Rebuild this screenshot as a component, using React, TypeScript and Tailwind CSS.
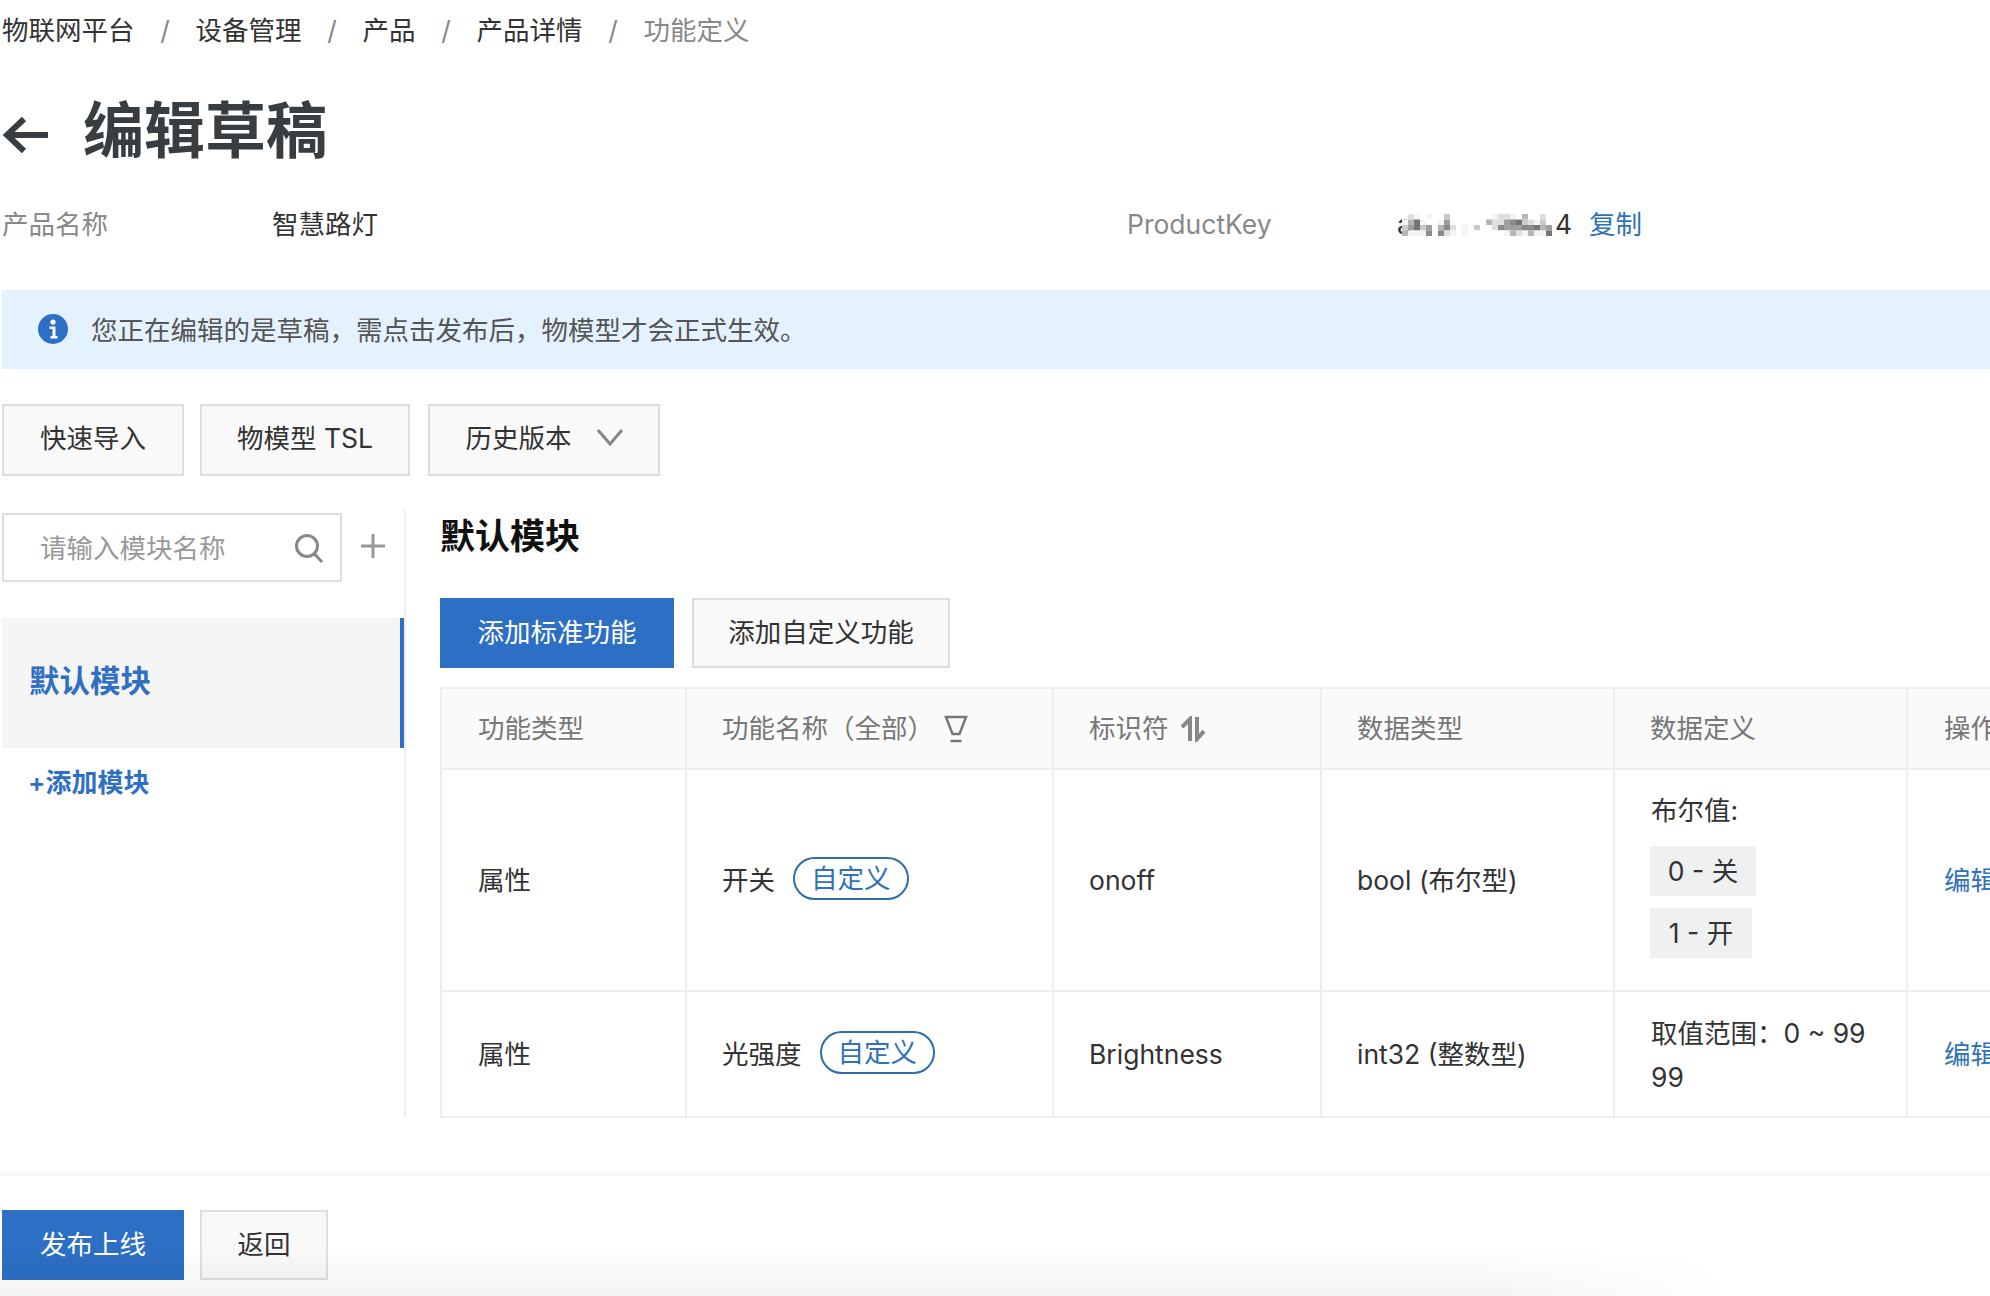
const crumbs = ["物联网平台", "设备管理", "产品", "产品详情"];

// 打码区域的灰度块
const mosaic = [
  ["fff", "ccc", "e0e0e0", "fff", "ddd", "fff", "fff", "bbb", "fff", "fff", "fff", "fff", "fff", "eee", "e4e4e4", "ddd", "ccc", "ccc", "ddd", "fff", "aaa", "fff", "e5e5e5", "ccc", "fff"],
  ["ddd", "aaa", "777", "ddd", "eee", "e5e5e5", "ddd", "999", "fff", "fff", "eee", "eee", "eee", "eee", "aaa", "ccc", "ccc", "999", "888", "777", "bbb", "ccc", "ddd", "bbb", "eee"],
  ["bbb", "999", "777", "bbb", "999", "fff", "aaa", "888", "ccc", "fff", "ddd", "e8e8e8", "bbb", "fff", "eee", "ccc", "888", "999", "999", "999", "888", "888", "777", "aaa", "999"],
  ["aaa", "ddd", "ddd", "ddd", "888", "fff", "888", "ccc", "ddd", "eee", "ddd", "eee", "eee", "fff", "fff", "fff", "fff", "ddd", "aaa", "ccc", "ddd", "aaa", "ddd", "ddd", "777"],
];

function Tag() {
  return (
    <span className="-mt-[5px] inline-flex h-[43px] items-center rounded-full border-2 border-[#2f6ea8] px-[16px] text-[#2f72b8]">
      自定义
    </span>
  );
}

export default function App() {
  return (
    <div className="relative h-[1296px] w-[1990px] overflow-hidden bg-white pl-[2px] font-['Inter','Noto_Sans_CJK_SC',sans-serif] text-[26.5px] text-[#333]">
      {/* 面包屑 */}
      <div className="flex h-[61px] items-center leading-none">
        {crumbs.map((c) => (
          <div key={c} className="flex items-center">
            <span>{c}</span>
            <span className="w-[61px] text-center text-[#888]">/</span>
          </div>
        ))}
        <span className="text-[#888]">功能定义</span>
      </div>

      {/* 标题 */}
      <div className="flex h-[137px] items-center">
        <svg width="48" height="40" viewBox="0 0 48 40" className="mt-[10px] text-[#373d41]" fill="none" stroke="currentColor" strokeWidth="6">
          <path d="M22 4 L5 20 L22 36" />
          <path d="M5 20 H46" />
        </svg>
        <h1 className="mt-[3px] ml-[33px] text-[61px] leading-none font-bold text-[#373d41]">编辑草稿</h1>
      </div>

      {/* 产品信息 */}
      <div className="flex h-[54px] items-center">
        <span className="w-[270px] text-[#888]">产品名称</span>
        <span className="w-[855px]">智慧路灯</span>
        <span className="w-[270px] text-[#888]">ProductKey</span>
        <span>a</span>
        <svg width="150" height="22" viewBox="0 0 150 22" className="mr-[3px] -ml-[10px] contrast-125">
          {mosaic.map((row, y) =>
            row.map((c, x) => <rect key={x} x={x * 6} y={y * 5.5} width="6" height="5.5" fill={`#${c}`} />),
          )}
        </svg>
        <span>4</span>
        <span className="ml-[17px] text-[#2f72b8]">复制</span>
      </div>

      {/* 提示 */}
      <div className="mt-[38px] flex h-[79px] items-center bg-[#e4f1fe] pl-[36px] text-[#555]">
        <svg width="30" height="30" viewBox="0 0 30 30" className="-mt-[2px]">
          <circle cx="15" cy="15" r="15" fill="#2d6fc4" />
          <circle cx="15" cy="8" r="2.6" fill="#fff" />
          <path d="M11.5 12.5 H17.5 V22 H19.5 V24.5 H12.5 V22 H14.5 V15 H11.5 Z" fill="#fff" />
        </svg>
        <span className="mt-[3px] ml-[23px]">您正在编辑的是草稿，需点击发布后，物模型才会正式生效。</span>
      </div>

      {/* 工具按钮 */}
      <div className="mt-[35px] flex h-[72px] gap-[16px]">
        <button className="w-[182px] border-2 border-[#ddd] bg-[#f9f9f9] pb-[2px]">快速导入</button>
        <button className="w-[210px] border-2 border-[#ddd] bg-[#f9f9f9] pb-[2px]">物模型 TSL</button>
        <button className="ml-[2px] flex w-[232px] items-center justify-center gap-[25px] border-2 border-[#ddd] bg-[#f9f9f9] pb-[2px]">
          历史版本
          <svg width="26" height="17" viewBox="0 0 26 17" className="-mt-[4px]" fill="none" stroke="#888" strokeWidth="3">
            <path d="M1 1 L13 15 L25 1" />
          </svg>
        </button>
      </div>

      <div className="mt-[34px] flex h-[607px]">
        {/* 模块列表 */}
        <aside className="w-[404px] shrink-0 border-r-2 border-[#eee] pt-[3px]">
          <div className="flex items-center">
            <div className="flex h-[69px] w-[340px] items-center border-2 border-[#ddd] pr-[16px] pl-[36px]">
              <input placeholder="请输入模块名称" className="mt-[2px] w-full min-w-0 flex-1 outline-none placeholder:text-[#999]" />
              <svg width="30" height="30" viewBox="0 0 30 30" fill="none" stroke="#888" strokeWidth="3">
                <circle cx="13" cy="13" r="10.5" />
                <path d="M20.5 21 L28 29" />
              </svg>
            </div>
            <svg width="26" height="26" viewBox="0 0 26 26" className="-mt-[4px] ml-[18px]" stroke="#999" strokeWidth="3">
              <path d="M13 1 V25 M1 13 H25" />
            </svg>
          </div>
          <div className="mt-[36px] flex h-[130px] items-center border-r-4 border-[#2d6fc4] bg-[#f5f5f5] pb-[5px] pl-[27px] text-[30.5px] font-semibold text-[#2f6fc4]">
            默认模块
          </div>
          <div className="flex h-[70px] items-center pb-[2px] pl-[26px] text-[26px] font-semibold text-[#2f6fc4]">+添加模块</div>
        </aside>

        {/* 主内容 */}
        <main className="pl-[34px]">
          <h2 className="flex h-[50px] items-center pt-[2px] text-[35px] font-bold text-[#111]">默认模块</h2>
          <div className="mt-[38px] flex h-[70px] gap-[18px]">
            <button className="w-[234px] bg-[#2d6fc4] text-white">添加标准功能</button>
            <button className="w-[258px] border-2 border-[#ddd] bg-[#f9f9f9]">添加自定义功能</button>
          </div>

          <table className="mt-[19px] w-[1620px] table-fixed border-collapse border-2 border-[#eee]">
            <colgroup>
              <col className="w-[245px]" />
              <col className="w-[367px]" />
              <col className="w-[268px]" />
              <col className="w-[293px]" />
              <col className="w-[293px]" />
              <col className="w-[154px]" />
            </colgroup>
            <thead>
              <tr className="h-[81px] bg-[#fafafa] text-left text-[#777]">
                <th className="border-2 border-[#eee] pl-[36px] font-normal">功能类型</th>
                <th className="border-2 border-[#eee] pl-[35px] font-normal">
                  <div className="flex items-center">
                    功能名称（全部）
                    <svg width="24" height="28" viewBox="0 0 24 28" className="ml-[10px]" fill="none" stroke="#777" strokeWidth="2.5">
                      <path d="M2 2 H22 L15.5 19 H8.5 Z" />
                      <path d="M6.5 26 H17.5" />
                    </svg>
                  </div>
                </th>
                <th className="border-2 border-[#eee] pl-[35px] font-normal">
                  <div className="flex items-center">
                    标识符
                    <svg width="24" height="26" viewBox="0 0 24 26" className="ml-[12px]" fill="none" stroke="#888" strokeWidth="4">
                      <path d="M9 25 V3 L1 11" />
                      <path d="M16 1 V23 L23 15" />
                    </svg>
                  </div>
                </th>
                <th className="border-2 border-[#eee] pl-[35px] font-normal">数据类型</th>
                <th className="border-2 border-[#eee] pl-[35px] font-normal">数据定义</th>
                <th className="border-2 border-[#eee] pl-[36px] font-normal">操作</th>
              </tr>
            </thead>
            <tbody>
              <tr className="h-[222px]">
                <td className="border-2 border-[#eee] pt-[2px] pl-[36px]">属性</td>
                <td className="border-2 border-[#eee] pt-[2px] pl-[35px]">
                  <div className="flex items-center gap-[18px]">
                    开关
                    <Tag />
                  </div>
                </td>
                <td className="border-2 border-[#eee] pt-[2px] pl-[35px]">onoff</td>
                <td className="border-2 border-[#eee] pt-[2px] pl-[35px]">bool (布尔型)</td>
                <td className="border-2 border-[#eee] pt-[18px] pb-[30px] pl-[36px] align-top">
                  <div className="leading-[44px]">布尔值:</div>
                  <div className="mt-[14px] -ml-px flex h-[50px] w-[106px] items-center justify-center bg-[#eef0f1] pt-[1px]">0 - 关</div>
                  <div className="mt-[12px] -ml-px flex h-[50px] w-[102px] items-center justify-center bg-[#eef0f1] pt-[1px]">1 - 开</div>
                </td>
                <td className="border-2 border-[#eee] pt-[2px] pl-[36px] text-[#2f72b8]">编辑</td>
              </tr>
              <tr className="h-[126px]">
                <td className="border-2 border-[#eee] pt-[2px] pl-[36px]">属性</td>
                <td className="border-2 border-[#eee] pt-[2px] pl-[35px]">
                  <div className="flex items-center gap-[18px]">
                    光强度
                    <Tag />
                  </div>
                </td>
                <td className="border-2 border-[#eee] pt-[2px] pl-[35px]">Brightness</td>
                <td className="border-2 border-[#eee] pt-[2px] pl-[35px]">int32 (整数型)</td>
                <td className="border-2 border-[#eee] pt-[2px] pl-[36px]">
                  <div className="w-[216px] leading-[44px] break-all">取值范围：0 ~ 9999</div>
                </td>
                <td className="border-2 border-[#eee] pt-[2px] pl-[36px] text-[#2f72b8]">编辑</td>
              </tr>
            </tbody>
          </table>
        </main>
      </div>

      {/* 底部操作栏 */}
      <div className="mt-[53px] -ml-[2px] h-[6px] bg-linear-to-b from-white to-[#f4f4f4]" />
      <div className="mt-[34px] flex h-[70px] gap-[16px]">
        <button className="w-[182px] bg-[#2d6fc4] text-white">发布上线</button>
        <button className="w-[128px] border-2 border-[#ddd] bg-[#f9f9f9]">返回</button>
      </div>

      {/* 页面底部的渐变阴影 */}
      <div className="absolute right-[260px] bottom-0 left-0 h-[48px] bg-linear-to-t from-[#0000000c] to-transparent [mask-image:linear-gradient(to_right,black_85%,transparent)]" />
    </div>
  );
}
